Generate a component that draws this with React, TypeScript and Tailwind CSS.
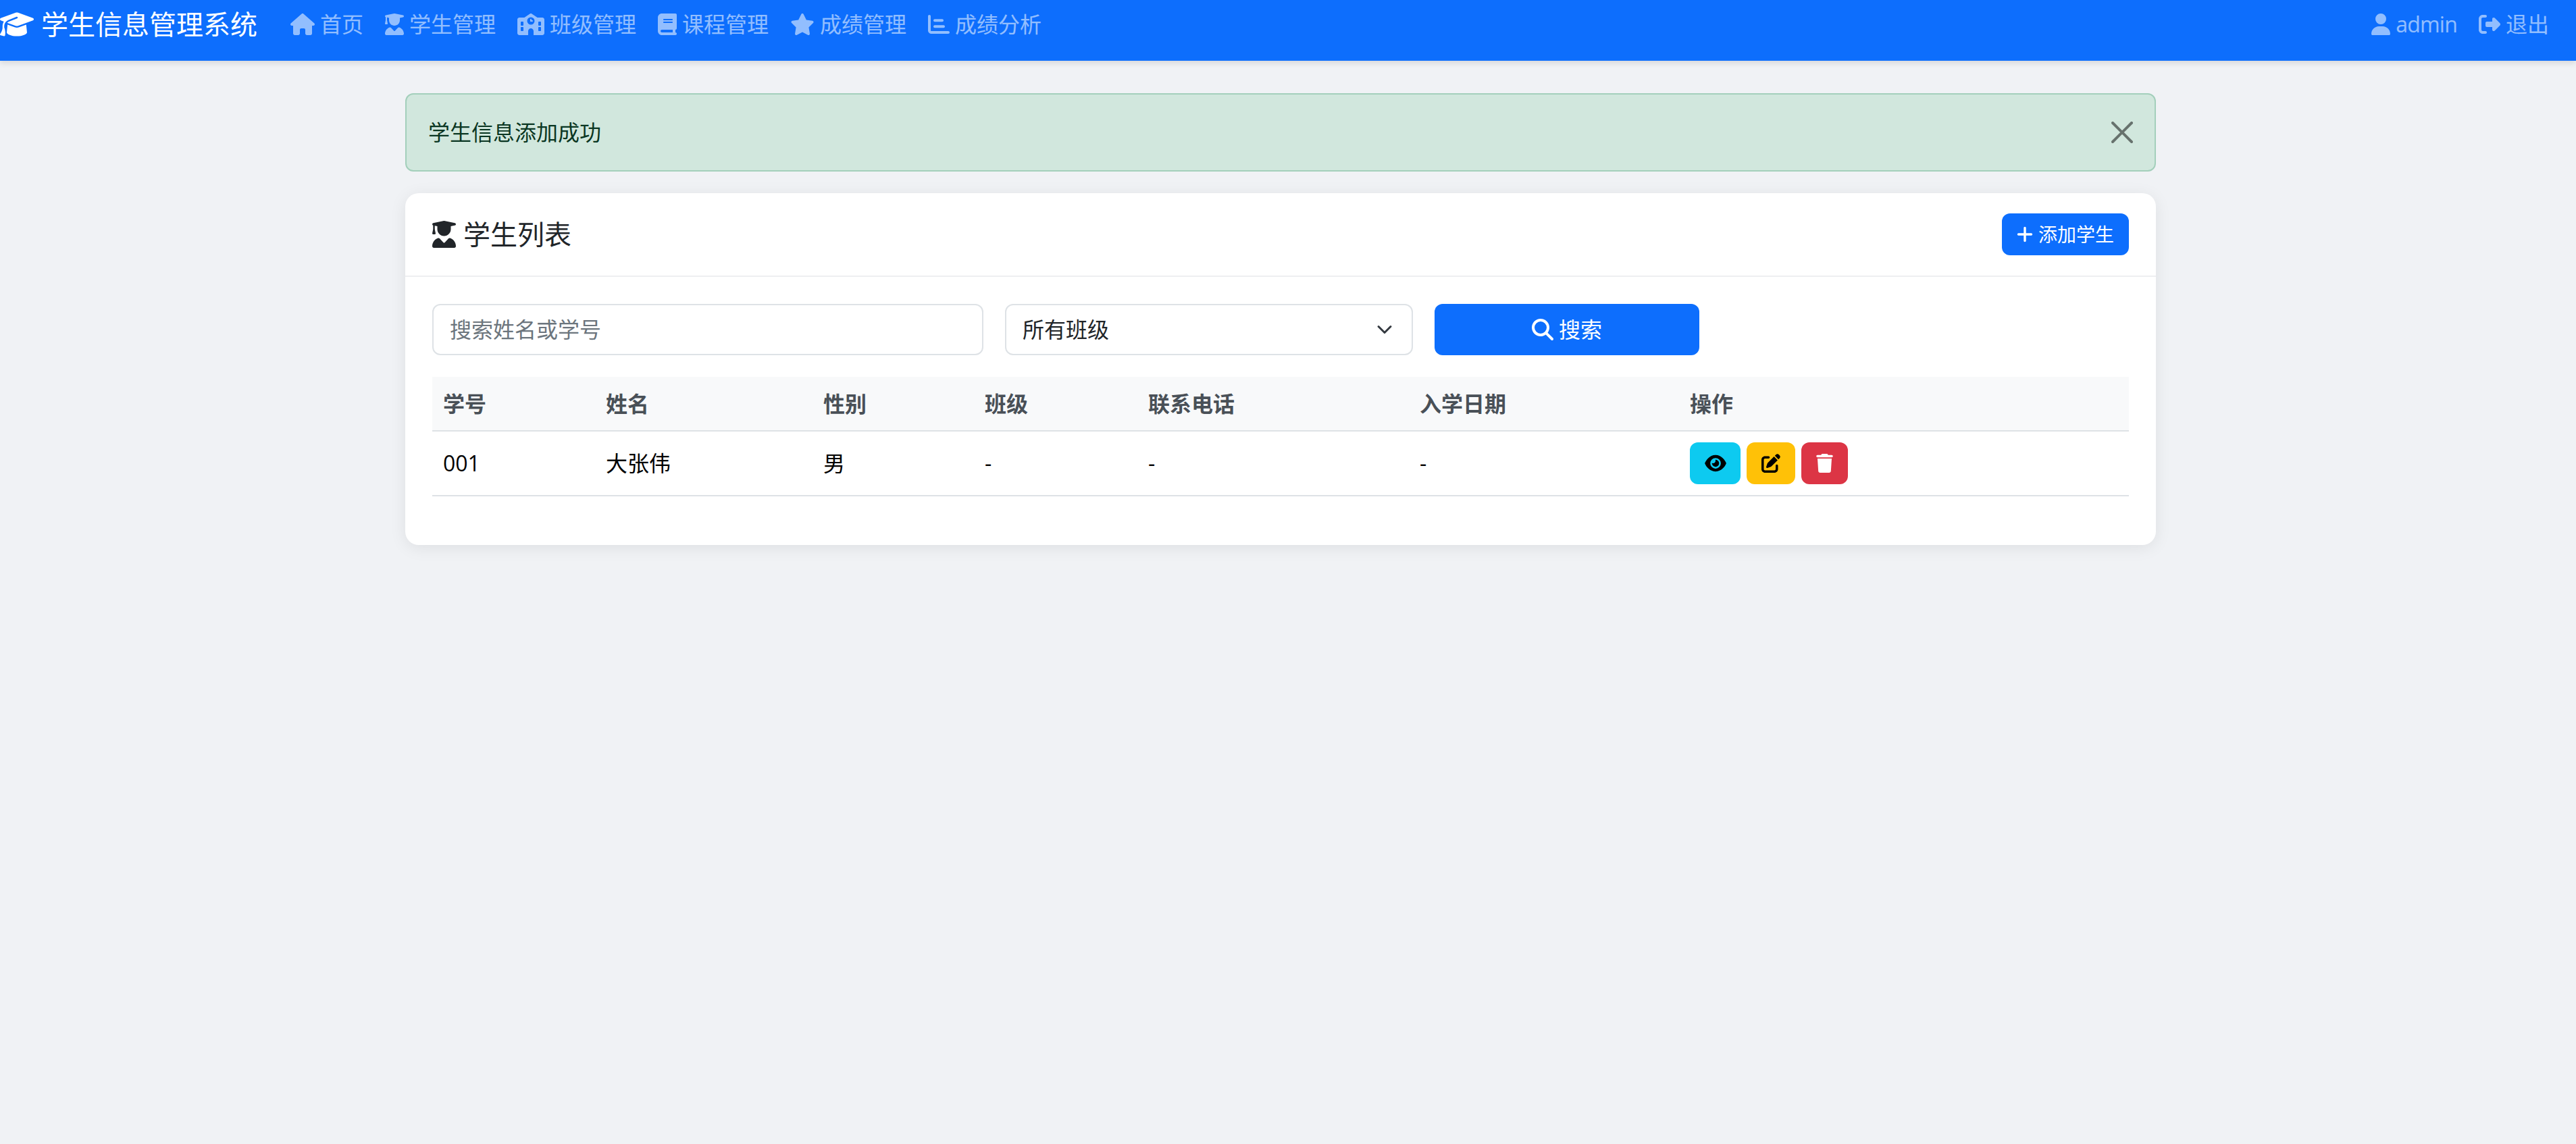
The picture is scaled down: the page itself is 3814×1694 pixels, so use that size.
import {
  FaGraduationCap,
  FaHouse,
  FaUserGraduate,
  FaSchool,
  FaBook,
  FaStar,
  FaUser,
  FaRightFromBracket,
  FaPlus,
  FaMagnifyingGlass,
  FaEye,
  FaPenToSquare,
  FaTrash,
} from 'react-icons/fa6';

// axis with two bars, the package's chart-bar has three
const ChartIcon = () => (
  <svg viewBox="0 0 512 512" fill="currentColor" className="inline-block w-[32px] h-[32px] mr-[8px] align-[-4px]">
    <path d="M32 32c17.7 0 32 14.3 32 32V400c0 8.8 7.2 16 16 16H480c17.7 0 32 14.3 32 32s-14.3 32-32 32H80c-44.2 0-80-35.8-80-80V64C0 46.3 14.3 32 32 32z" />
    <rect x="128" y="133" width="240" height="64" rx="32" />
    <rect x="128" y="277" width="272" height="64" rx="32" />
  </svg>
);

const navLinks = [
  { label: '首页', icon: <FaHouse className="inline-block w-[36px] h-[32px] mr-[8px] align-[-4px]" /> },
  { label: '学生管理', icon: <FaUserGraduate className="inline-block w-[28px] h-[32px] mr-[8px] align-[-4px]" /> },
  { label: '班级管理', icon: <FaSchool className="inline-block w-[40px] h-[32px] mr-[8px] align-[-4px]" /> },
  { label: '课程管理', icon: <FaBook className="inline-block w-[28px] h-[32px] mr-[8px] align-[-4px]" /> },
  { label: '成绩管理', icon: <FaStar className="inline-block w-[36px] h-[32px] mr-[8px] align-[-4px]" /> },
  { label: '成绩分析', icon: <ChartIcon /> },
];

const columns = [
  { label: '学号', width: 'w-[241px]' },
  { label: '姓名', width: 'w-[322px]' },
  { label: '性别', width: 'w-[239px]' },
  { label: '班级', width: 'w-[242px]' },
  { label: '联系电话', width: 'w-[402px]' },
  { label: '入学日期', width: 'w-[400px]' },
  { label: '操作', width: '' },
];

const row = ['001', '大张伟', '男', '-', '-', '-'];

export default function App() {
  return (
    <div className="min-h-[1694px] bg-[#f0f2f5] text-[32px] leading-[48px] text-black font-['Open_Sans','Noto_Sans_CJK_SC',sans-serif]">
      {/* Navbar */}
      <nav className="flex items-center justify-between h-[90px] pb-[18px] pr-[24px] bg-[#0d6efd] shadow-[0_4px_8px_rgba(0,0,0,0.1)]">
        <div className="flex items-center">
          <a className="flex items-center mr-[33px] text-[40px] leading-[60px] text-white">
            <FaGraduationCap className="w-[50px] h-[40px] mr-[11px]" />
            学生信息管理系统
          </a>
          <div className="flex">
            {navLinks.map((link) => (
              <a key={link.label} className="px-[16px] text-white/55 whitespace-nowrap">
                {link.icon}
                {link.label}
              </a>
            ))}
          </div>
        </div>
        <div className="flex">
          <a className="px-[16px] text-white/55 tracking-[-0.8px]">
            <FaUser className="inline-block w-[28px] h-[32px] mr-[8px] align-[-4px]" />
            admin
          </a>
          <a className="px-[16px] text-white/55">
            <FaRightFromBracket className="inline-block w-[32px] h-[32px] mr-[8px] align-[-4px]" />
            退出
          </a>
        </div>
      </nav>

      <div className="w-[3792px]">
        <div className="w-[2592px] mx-auto pt-[48px]">
          {/* Alert */}
          <div className="flex items-center justify-between h-[116px] mb-[32px] pl-[32px] pr-[32px] rounded-[12px] border-2 border-[#a3cfbb] bg-[#d1e7dd] text-[#0a3622]">
            <span>学生信息添加成功</span>
            <svg viewBox="0 0 16 16" className="w-[32px] h-[32px] opacity-50">
              <path d="M.293.293a1 1 0 0 1 1.414 0L8 6.586 14.293.293a1 1 0 1 1 1.414 1.414L9.414 8l6.293 6.293a1 1 0 0 1-1.414 1.414L8 9.414l-6.293 6.293a1 1 0 0 1-1.414-1.414L6.586 8 .293 1.707a1 1 0 0 1 0-1.414" />
            </svg>
          </div>

          {/* Card */}
          <div className="rounded-[20px] bg-white shadow-[0_4px_24px_rgba(0,0,0,0.08)]">
            <div className="flex items-center justify-between h-[124px] px-[40px] border-b-2 border-[#eeeff1]">
              <h5 className="flex items-center text-[40px] leading-[48px] text-[#212529]">
                <FaUserGraduate className="w-[35px] h-[40px] mr-[11px]" />
                学生列表
              </h5>
              <button className="flex items-center h-[62px] px-[22px] rounded-[12px] bg-[#0d6efd] text-[28px] text-white">
                <FaPlus className="w-[24px] h-[28px] mr-[8px]" />
                添加学生
              </button>
            </div>

            <div className="p-[40px]">
              <div className="grid grid-cols-12 gap-x-[32px] mb-[32px]">
                <div className="col-span-4 flex items-center h-[76px] px-[24px] rounded-[12px] border-2 border-[#dee2e6] text-[#6c757d]">
                  搜索姓名或学号
                </div>
                <div className="col-span-3 relative flex items-center h-[76px] px-[24px] rounded-[12px] border-2 border-[#dee2e6] text-[#212529]">
                  所有班级
                  <svg viewBox="0 0 16 16" className="absolute right-[28px] top-[24px] w-[24px] h-[24px]" fill="none" stroke="#343a40" strokeWidth="2" strokeLinecap="round" strokeLinejoin="round">
                    <path d="m2 5 6 6 6-6" />
                  </svg>
                </div>
                <button className="col-span-2 flex items-center justify-center h-[76px] rounded-[12px] bg-[#0d6efd] text-white">
                  <FaMagnifyingGlass className="w-[32px] h-[32px] mr-[8px]" />
                  搜索
                </button>
              </div>

              <table className="w-full table-fixed border-collapse">
                <thead>
                  <tr className="bg-[#f8f9fa] border-b-2 border-[#dee2e6]">
                    {columns.map((col) => (
                      <th key={col.label} className={`${col.width} h-[80px] px-[16px] text-left font-bold text-[#495057]`}>
                        {col.label}
                      </th>
                    ))}
                  </tr>
                </thead>
                <tbody>
                  <tr className="border-b-2 border-[#dee2e6]">
                    {row.map((cell, i) => (
                      <td key={i} className="h-[96px] px-[16px]">{cell}</td>
                    ))}
                    <td className="h-[96px] px-[16px]">
                      <div className="flex gap-[9px]">
                        <button className="flex items-center justify-center w-[75px] h-[62px] rounded-[12px] bg-[#0dcaf0] text-black">
                          <FaEye className="w-[32px] h-[28px]" />
                        </button>
                        <button className="flex items-center justify-center w-[72px] h-[62px] rounded-[12px] bg-[#ffc107] text-black">
                          <FaPenToSquare className="w-[28px] h-[28px]" />
                        </button>
                        <button className="flex items-center justify-center w-[69px] h-[62px] rounded-[12px] bg-[#dc3545] text-white">
                          <FaTrash className="w-[25px] h-[28px]" />
                        </button>
                      </div>
                    </td>
                  </tr>
                </tbody>
              </table>
              <div className="h-[32px]" />
            </div>
          </div>
        </div>
      </div>
    </div>
  );
}
